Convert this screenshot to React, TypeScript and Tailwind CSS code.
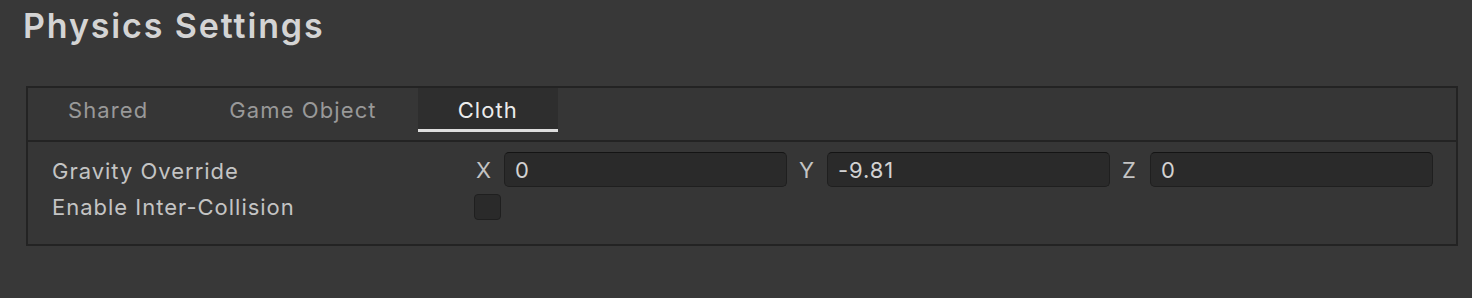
import { useState } from "react";

const tabs = ["Shared", "Game Object", "Cloth"];

function AxisField({ axis, value }: { axis: string; value: string }) {
  return (
    <div className="flex flex-1 items-center">
      <span className="w-[30px] shrink-0 pl-[2px] pt-[2px] text-[22px] tracking-[0.05em] text-[#c4c4c4]">{axis}</span>
      <div className="flex h-[35px] flex-1 items-center rounded-[5px] border border-[#1f1f1f] border-t-[#141414] bg-[#2a2a2a] px-[10px] pt-[2px] text-[22px] tracking-[0.04em] text-[#d2d2d2]">
        {value}
      </div>
    </div>
  );
}

export default function App() {
  const [active, setActive] = useState("Cloth");
  const [collide, setCollide] = useState(false);

  return (
    <div
      className="h-[298px] w-full bg-[#383838] pt-[4px] pl-[26px] pr-[14px]"
      style={{ fontFamily: "Inter, 'Noto Sans', sans-serif" }}
    >
      <h1 className="-ml-[3px] text-[34px] leading-[44px] font-semibold tracking-[0.055em] text-[#d4d4d4]">Physics Settings</h1>

      <div className="mt-[38px] border-2 border-[#232323] bg-[#363636]">
        {/* tab bar */}
        <div className="flex h-[54px] gap-[1px] border-b-2 border-[#232323]">
          {tabs.map((t) => {
            const on = t === active;
            return (
              <button
                key={t}
                onClick={() => setActive(t)}
                className={
                  "flex h-[44px] items-center border-b-[3px] px-[40px] pt-[3px] text-[22px] tracking-[0.05em] " +
                  (on
                    ? "border-[#dedede] bg-[#2e2e2e] text-[#ececec]"
                    : "border-transparent text-[#999999]")
                }
              >
                {t}
              </button>
            );
          })}
        </div>

        {/* content */}
        <div className="flex flex-col gap-[7px] pt-[10px] pb-[24px] pl-[24px] pr-[23px]">
          <div className="flex h-[35px] items-center">
            <span className="w-[422px] shrink-0 pt-[3px] text-[22px] tracking-[0.045em] text-[#c4c4c4]">Gravity Override</span>
            <div className="flex flex-1 gap-[10px]">
              <AxisField axis="X" value="0" />
              <AxisField axis="Y" value="-9.81" />
              <AxisField axis="Z" value="0" />
            </div>
          </div>
          <div className="flex h-[26px] items-center">
            <span className="w-[422px] shrink-0 pt-[1px] text-[22px] tracking-[0.045em] text-[#c4c4c4]">Enable Inter-Collision</span>
            <button
              onClick={() => setCollide(!collide)}
              className="h-[26px] w-[27px] rounded-[4px] border border-[#1f1f1f] bg-[#2a2a2a] text-[16px] leading-none text-[#d2d2d2]"
            >
              {collide ? "✓" : ""}
            </button>
          </div>
        </div>
      </div>
    </div>
  );
}
